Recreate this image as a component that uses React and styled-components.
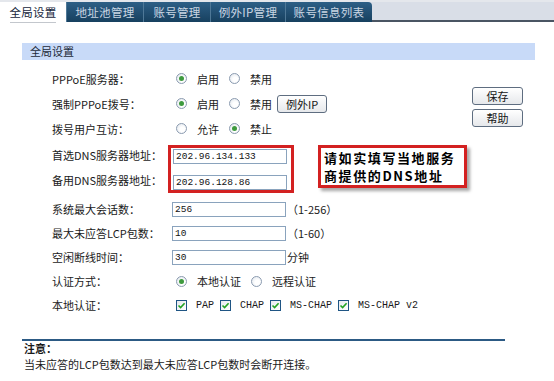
import React from 'react';
import styled, { createGlobalStyle } from 'styled-components';

const Global = createGlobalStyle`
  html, body {
    margin: 0;
    padding: 0;
    background: #fff;
  }
  body {
    font-family: "Noto Sans CJK SC", "Liberation Sans", sans-serif;
    font-size: 11px;
    color: #1a1a1a;
  }
`;

const Page = styled.div`
  width: 554px;
  height: 381px;
  overflow: hidden;
`;

const TabBar = styled.div`
  display: flex;
  height: 22px;
  background: #d9dee7;
  border-top: 2px solid #e4e7ec;
  box-sizing: border-box;
`;

const Tab = styled.div`
  position: relative;
  width: ${(p) => p.$w}px;
  display: flex;
  align-items: center;
  justify-content: center;
  box-sizing: border-box;
  color: ${(p) => (p.$active ? '#15263c' : '#c9d6e3')};
  background: ${(p) =>
    p.$active ? '#fff' : 'linear-gradient(#2d5f86, #17405f)'};
  border-left: ${(p) => (p.$active ? 'none' : '1px solid #4f7897')};
  border-top-right-radius: ${(p) => (p.$last ? '4px' : '0')};
  font-size: 11.5px;
  letter-spacing: 0.3px;

  &::after {
    content: '';
    display: ${(p) => (p.$active ? 'block' : 'none')};
    position: absolute;
    left: 10px;
    right: 10px;
    bottom: -1px;
    height: 1px;
    background: #c3c7cd;
  }
`;

const TabFill = styled.div`
  flex: 1;
  border-bottom: 2px solid #4a5563;
`;

const Content = styled.div`
  padding: 21px 19px 0 22px;
`;

const PanelHeader = styled.div`
  height: 17px;
  line-height: 17px;
  padding-left: 8px;
  background: #c8daf8;
  color: #1d2a3a;
`;

const FormArea = styled.div`
  display: flex;
  justify-content: space-between;
`;

const Form = styled.div`
  display: flex;
  flex-direction: column;
  padding: 6px 0 0 30px;
`;

const Row = styled.div`
  display: flex;
  align-items: center;
  height: ${(p) => p.$h || 24}px;
  margin-top: ${(p) => p.$mt || 0}px;
`;

const Label = styled.div`
  width: 120px;
  flex-shrink: 0;
`;

const RadioGroup = styled.div`
  display: flex;
  align-items: center;
  padding-left: 4px;
`;

const Option = styled.label`
  display: flex;
  align-items: center;
  gap: 10px;
  margin-right: 10px;
`;

const Radio = styled.span`
  position: relative;
  width: 11px;
  height: 11px;
  border-radius: 50%;
  box-sizing: border-box;
  border: 1px solid #8b9bb0;
  background: radial-gradient(circle at 60% 60%, #ffffff 30%, #dde3ea 100%);

  &::after {
    content: '';
    display: ${(p) => (p.$on ? 'block' : 'none')};
    position: absolute;
    left: 2px;
    top: 2px;
    width: 5px;
    height: 5px;
    border-radius: 50%;
    background: #3e9a3e;
  }
`;

const SmallButton = styled.button`
  height: ${(p) => p.$h || 18}px;
  width: ${(p) => p.$w}px;
  padding: 0;
  margin-left: ${(p) => p.$ml || 0}px;
  border: 1px solid #5e6d80;
  border-radius: 3px;
  background: linear-gradient(#ffffff, #e6e8eb);
  font-family: "Noto Sans CJK SC", "Liberation Sans", sans-serif;
  font-size: 11px;
  color: #151515;
  cursor: pointer;
`;

const DnsBlock = styled.div`
  display: flex;
  align-items: flex-start;
  margin-top: 4px;
`;

const DnsLabels = styled.div`
  display: flex;
  flex-direction: column;
  gap: 5px;
  width: 116px;
`;

const DnsLabel = styled.div`
  height: 20px;
  line-height: 20px;
`;

const RedBox = styled.div`
  display: flex;
  flex-direction: column;
  gap: 11px;
  padding: 1px 4px 0 2px;
  border: 3px solid #d32121;
`;

const Input = styled.div`
  width: 114px;
  height: 15px;
  box-sizing: border-box;
  border: 1px solid #8aa3bd;
  background: #fff;
  padding-left: 2px;
  font-family: "Liberation Mono", monospace;
  font-size: 9.5px;
  line-height: 13px;
  color: #111;
`;

const Callout = styled.div`
  margin-left: 24px;
  width: 138px;
  padding: 1px 2px 0 3px;
  border: 3px solid #d32121;
  box-shadow: 3px 3px 3px rgba(0, 0, 0, 0.35);
  font-size: 13px;
  font-weight: 700;
  letter-spacing: 1.6px;
  line-height: 18px;
  white-space: nowrap;
  color: #000;
`;

const CalloutLine = styled.div`
  height: 18px;
`;

const Hint = styled.span`
  margin-left: 1px;
`;

const CheckGroup = styled.div`
  display: flex;
  align-items: center;
  padding-left: 4px;
`;

const CheckOption = styled.label`
  display: flex;
  align-items: center;
  gap: 9px;
  margin-right: 6px;
  font-family: "Liberation Mono", monospace;
  font-size: 10px;
`;

const Box = styled.span`
  display: flex;
  width: 11px;
  height: 11px;
  box-sizing: border-box;
  border: 1px solid #1f5584;
  background: linear-gradient(135deg, #e6e9ee, #ffffff);
`;

const SideButtons = styled.div`
  display: flex;
  flex-direction: column;
  gap: 4px;
  padding: 27px 12px 0 0;
`;

const NoteLine = styled.div`
  width: 483px;
  height: 2px;
  margin-top: 22px;
  background: #2c5a84;
`;

const NoteTitle = styled.div`
  padding-left: 2px;
  line-height: 15px;
  font-weight: 700;
`;

const NoteText = styled.div`
  padding-left: 2px;
  line-height: 16px;
`;

const Check = () => (
  <Box>
    <svg width="9" height="9" viewBox="0 0 9 9">
      <path d="M1.5 4.5 L3.6 6.6 L7.6 2.2" fill="none" stroke="#22a322" strokeWidth="1.6" />
    </svg>
  </Box>
);

const tabs = [
  { name: '全局设置', w: 66 },
  { name: '地址池管理', w: 77 },
  { name: '账号管理', w: 67 },
  { name: '例外IP管理', w: 75 },
  { name: '账号信息列表', w: 87 },
];

const Radios = ({ options, selected }) => (
  <RadioGroup>
    {options.map((o, i) => (
      <Option key={o}>
        <Radio $on={i === selected} />
        {o}
      </Option>
    ))}
  </RadioGroup>
);

export default function App() {
  return (
    <Page>
      <Global />
      <TabBar>
        {tabs.map((t, i) => (
          <Tab key={t.name} $w={t.w} $active={i === 0} $last={i === tabs.length - 1}>
            {t.name}
          </Tab>
        ))}
        <TabFill />
      </TabBar>

      <Content>
        <PanelHeader>全局设置</PanelHeader>
        <FormArea>
          <Form>
            <Row $h={25}>
              <Label>PPPoE服务器：</Label>
              <Radios options={['启用', '禁用']} selected={0} />
            </Row>
            <Row $h={25}>
              <Label>强制PPPoE拨号：</Label>
              <Radios options={['启用', '禁用']} selected={0} />
              <SmallButton $w={50} $ml={-5}>例外IP</SmallButton>
            </Row>
            <Row $h={25}>
              <Label>拨号用户互访：</Label>
              <Radios options={['允许', '禁止']} selected={1} />
            </Row>

            <DnsBlock>
              <DnsLabels>
                <DnsLabel>首选DNS服务器地址：</DnsLabel>
                <DnsLabel>备用DNS服务器地址：</DnsLabel>
              </DnsLabels>
              <RedBox>
                <Input>202.96.134.133</Input>
                <Input>202.96.128.86</Input>
              </RedBox>
              <Callout>
                <CalloutLine>请如实填写当地服务</CalloutLine>
                <CalloutLine>商提供的DNS地址</CalloutLine>
              </Callout>
            </DnsBlock>

            <Row $mt={4}>
              <Label>系统最大会话数：</Label>
              <Input>256</Input>
              <Hint>（1-256）</Hint>
            </Row>
            <Row>
              <Label>最大未应答LCP包数：</Label>
              <Input>10</Input>
              <Hint>（1-60）</Hint>
            </Row>
            <Row>
              <Label>空闲断线时间：</Label>
              <Input>30</Input>
              <Hint>分钟</Hint>
            </Row>
            <Row>
              <Label>认证方式：</Label>
              <Radios options={['本地认证', '远程认证']} selected={0} />
            </Row>
            <Row>
              <Label>本地认证：</Label>
              <CheckGroup>
                {['PAP', 'CHAP', 'MS-CHAP', 'MS-CHAP v2'].map((c) => (
                  <CheckOption key={c}>
                    <Check />
                    {c}
                  </CheckOption>
                ))}
              </CheckGroup>
            </Row>
          </Form>
          <SideButtons>
            <SmallButton $w={51}>保存</SmallButton>
            <SmallButton $w={51}>帮助</SmallButton>
          </SideButtons>
        </FormArea>

        <NoteLine />
        <NoteTitle>注意：</NoteTitle>
        <NoteText>当未应答的LCP包数达到最大未应答LCP包数时会断开连接。</NoteText>
      </Content>
    </Page>
  );
}
